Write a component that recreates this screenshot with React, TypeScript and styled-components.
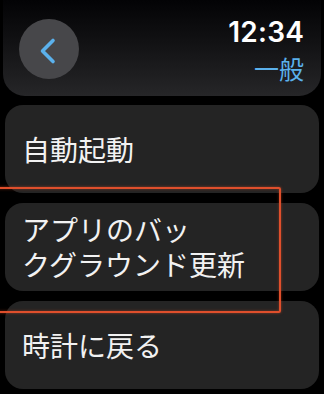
import React from "react";
import styled, { createGlobalStyle } from "styled-components";

const Global = createGlobalStyle`
  html, body { margin: 0; padding: 0; background: #000; }
  body { width: 324px; height: 394px; overflow: hidden; }
`;

const Screen = styled.div`
  position: relative;
  width: 324px;
  height: 394px;
  background: #000;
  padding: 0 5px;
  box-sizing: border-box;
  display: flex;
  flex-direction: column;
  font-family: "Noto Sans CJK JP", "Noto Sans", sans-serif;
  overflow: hidden;
`;

const Header = styled.header`
  height: 96px;
  margin: 0 -2px;
  box-sizing: border-box;
  padding: 18px 17px 0 16px;
  border-radius: 0 0 22px 22px;
  background: linear-gradient(180deg, #030305 0%, #121214 45%, #262628 100%);
  display: flex;
  justify-content: space-between;
  align-items: flex-start;
`;

const BackButton = styled.button`
  width: 60px;
  height: 60px;
  margin-top: 1px;
  border: none;
  border-radius: 50%;
  background: #47474a;
  padding: 0;
  display: flex;
  align-items: center;
  justify-content: center;
  cursor: pointer;
`;

const TitleBlock = styled.div`
  display: flex;
  flex-direction: column;
  align-items: flex-end;
`;

const Time = styled.div`
  font-family: Inter, "Noto Sans", sans-serif;
  font-weight: 600;
  font-size: 28px;
  line-height: 28px;
  color: #fff;
  letter-spacing: 0.2px;
`;

const Title = styled.div`
  margin-top: 10px;
  font-size: 25px;
  line-height: 25px;
  color: #5bb1ec;
  letter-spacing: 0;
`;

const List = styled.div`
  margin-top: 9px;
  display: flex;
  flex-direction: column;
  gap: 10px;
`;

const Card = styled.div`
  height: 88px;
  box-sizing: border-box;
  padding: 0 17px;
  border-radius: 18px;
  background: #242424;
  display: flex;
  align-items: center;
`;

const Label = styled.div`
  font-size: 28px;
  line-height: 35px;
  color: #f2f2f2;
  font-weight: 400;
`;

const Highlight = styled.div`
  position: absolute;
  left: -10px;
  top: 187px;
  width: 291px;
  height: 126px;
  box-sizing: border-box;
  border: 2px solid #df4f2c;
  border-radius: 2px;
  box-shadow: 0 0 3px rgba(230, 80, 40, 0.55), inset 0 0 3px rgba(230, 80, 40, 0.45);
  pointer-events: none;
`;

export default function App() {
  return (
    <>
      <Global />
      <Screen>
        <Header>
          <BackButton aria-label="戻る">
            <svg width="60" height="60" viewBox="0 0 60 60">
              <polyline
                points="34,21.5 23.5,32 34,42.5"
                fill="none"
                stroke="#5bb1ec"
                strokeWidth="3.6"
                strokeLinecap="round"
                strokeLinejoin="round"
              />
            </svg>
          </BackButton>
          <TitleBlock>
            <Time>12:34</Time>
            <Title>一般</Title>
          </TitleBlock>
        </Header>
        <List>
          <Card>
            <Label>自動起動</Label>
          </Card>
          <Card>
            <Label>
              アプリのバッ
              <br />
              クグラウンド更新
            </Label>
          </Card>
          <Card>
            <Label>時計に戻る</Label>
          </Card>
        </List>
        <Highlight />
      </Screen>
    </>
  );
}
